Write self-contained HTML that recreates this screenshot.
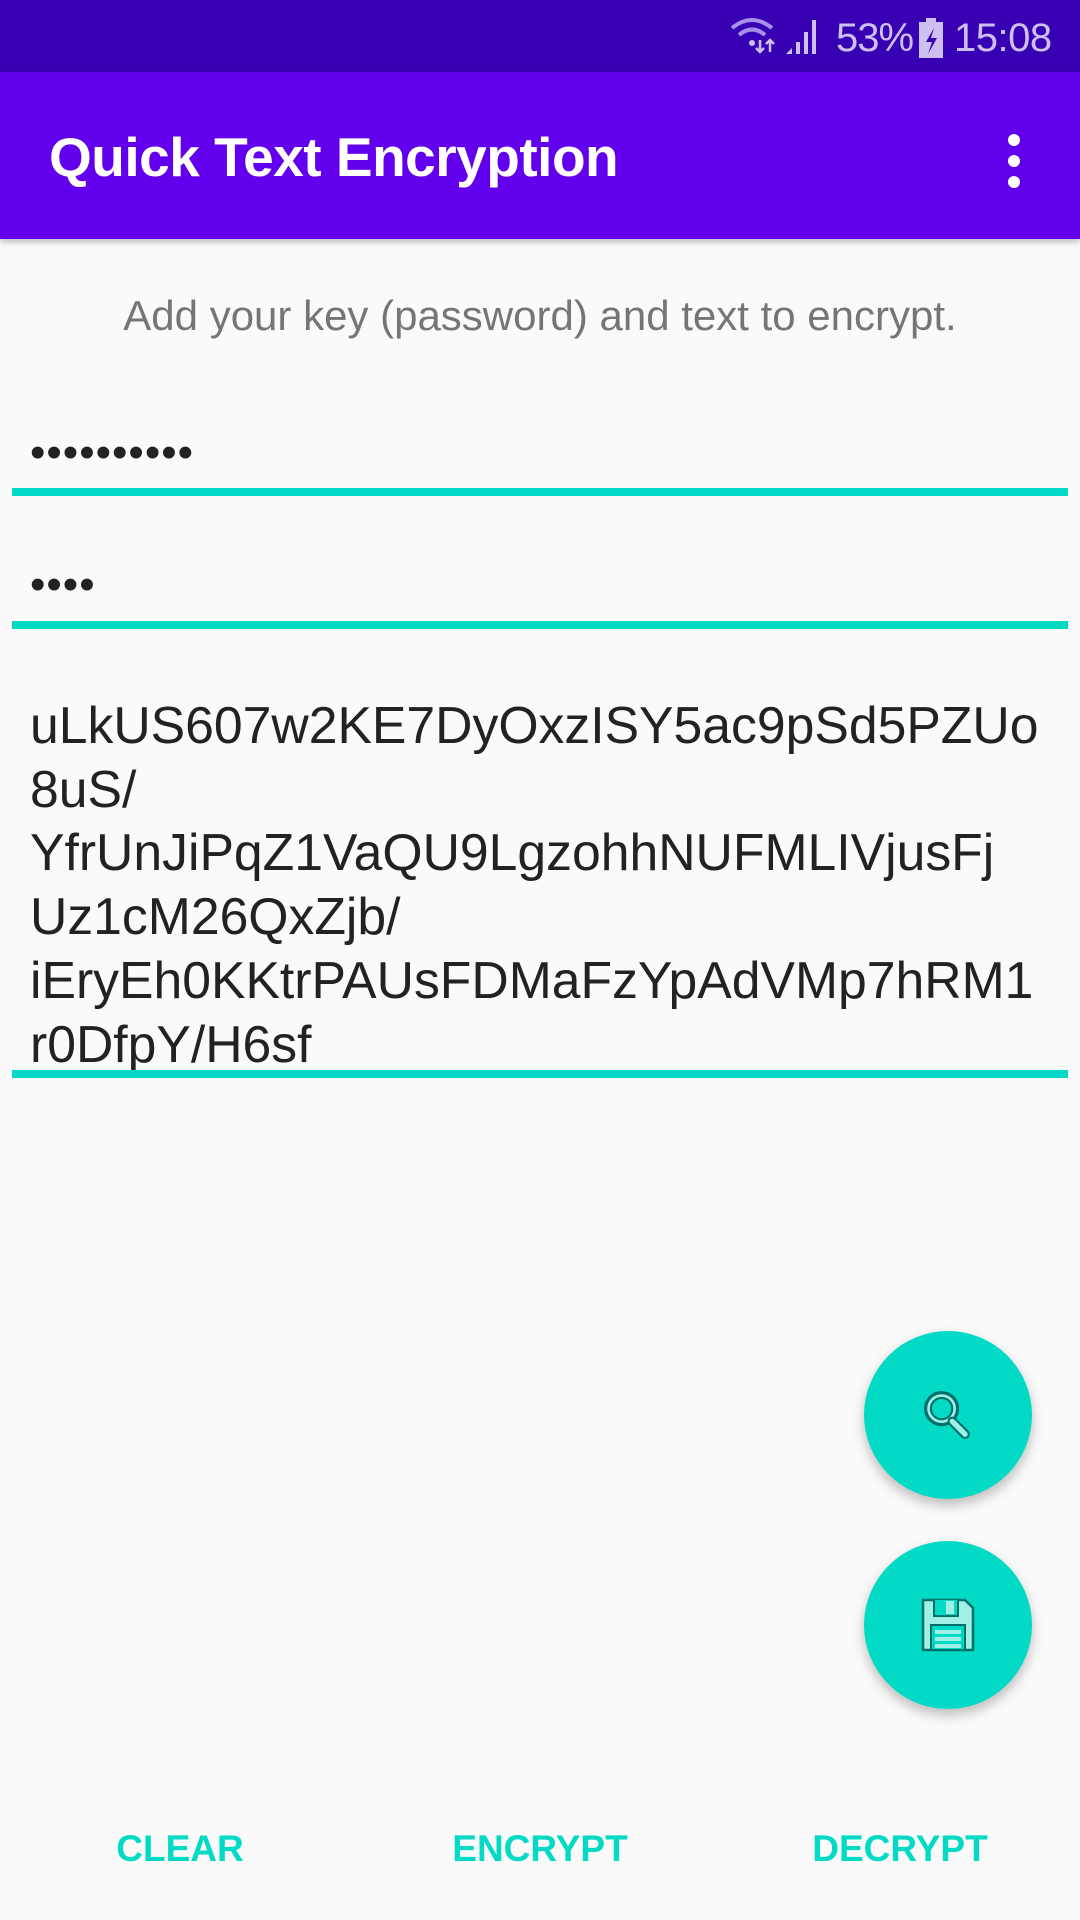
<!DOCTYPE html>
<html><head><meta charset="utf-8"><style>
*{margin:0;padding:0;box-sizing:border-box}
body{width:1080px;height:1920px;background:#fafafa;font-family:"Liberation Sans",sans-serif;position:relative;overflow:hidden}
.sb{position:absolute;top:0;left:0;width:1080px;height:72px;background:#3700B3;color:#cdbff0}
.ab{position:absolute;top:72px;left:0;width:1080px;height:167px;background:#6200EE;box-shadow:0 3px 6px rgba(0,0,0,.25)}
.title{position:absolute;left:49px;color:#fff;font-size:55px;font-weight:bold;letter-spacing:-0.5px}
.hint{position:absolute;left:0;width:1080px;text-align:center;top:292px;color:#757575;font-size:42px}
.line{position:absolute;left:12px;width:1056px;height:8px;background:#03DAC5}
.dots{position:absolute;left:30px;font-size:44px;color:#222;letter-spacing:1px}
.ta{position:absolute;left:30px;top:694px;width:1045px;font-size:51.7px;line-height:63.7px;color:#222;word-break:break-all}
.fab{position:absolute;width:168px;height:168px;border-radius:50%;background:#03DAC5;box-shadow:0 6px 12px rgba(0,0,0,.25)}
.btn{position:absolute;top:1828px;color:#03DAC5;font-weight:bold;font-size:37px;transform:translateX(-50%)}
</style></head><body>
<div class="sb">
<svg style="position:absolute;left:730px;top:16px" width="70" height="40" viewBox="0 0 70 40"><path d="M2 12 Q22 -4 42 12" stroke="#a890e8" stroke-width="4" fill="none"/><path d="M9 19 Q22 8 35 19" stroke="#a890e8" stroke-width="4" fill="none"/><circle cx="22" cy="27" r="3" fill="#cdbff0"/><path d="M30 24v12M26 32l4 4 4-4M40 36v-12M36 28l4-4 4 4" stroke="#cdbff0" stroke-width="2.5" fill="none"/></svg>
<svg style="position:absolute;left:784px;top:16px" width="40" height="40" viewBox="0 0 40 40"><path d="M2 38l6-6v6z" fill="#cdbff0"/><rect x="12" y="26" width="4" height="12" fill="#cdbff0"/><rect x="20" y="16" width="4" height="22" fill="#cdbff0"/><rect x="28" y="4" width="4" height="34" fill="#cdbff0"/></svg>
<div style="position:absolute;left:836px;top:16px;font-size:40px;letter-spacing:-1px">53%</div>
<svg style="position:absolute;left:918px;top:18px" width="26" height="40" viewBox="0 0 26 40"><rect x="8" y="0" width="10" height="4" fill="#cdbff0"/><rect x="1" y="4" width="24" height="36" fill="#cdbff0"/><path d="M16 10l-8 14h6l-4 12 9-16h-6z" fill="#3700B3"/></svg>
<div style="position:absolute;left:954px;top:16px;font-size:40px;letter-spacing:-0.5px">15:08</div>
</div>
<div class="ab"><div class="title" style="top:53px">Quick Text Encryption</div>
<svg style="position:absolute;left:1002px;top:60px" width="24" height="60"><circle cx="12" cy="8" r="6" fill="#fff"/><circle cx="12" cy="29" r="6" fill="#fff"/><circle cx="12" cy="50" r="6" fill="#fff"/></svg></div>
<div class="hint">Add your key (password) and text to encrypt.</div>
<div class="dots" style="top:428px">••••••••••</div>
<div class="line" style="top:488px"></div>
<div class="dots" style="top:560px">••••</div>
<div class="line" style="top:621px"></div>
<div class="ta">uLkUS607w2KE7DyOxzISY5ac9pSd5PZUo<br>8uS/<br>YfrUnJiPqZ1VaQU9LgzohhNUFMLIVjusFj<br>Uz1cM26QxZjb/<br>iEryEh0KKtrPAUsFDMaFzYpAdVMp7hRM1<br>r0DfpY/H6sf</div>
<div class="line" style="top:1070px"></div>
<div class="fab" style="left:864px;top:1331px"><svg style="position:absolute;left:52px;top:52px" width="64" height="64" viewBox="0 0 60 60"><circle cx="24" cy="24" r="15" fill="#a0f0e8" stroke="#00706a" stroke-width="3"/><circle cx="24" cy="24" r="10" fill="#03DAC5" stroke="#00706a" stroke-width="2"/><path d="M34 36l12 12" stroke="#00706a" stroke-width="9" stroke-linecap="round"/><path d="M34 36l12 12" stroke="#a0f0e8" stroke-width="5" stroke-linecap="round"/></svg></div>
<div class="fab" style="left:864px;top:1541px"><svg style="position:absolute;left:54px;top:54px" width="60" height="60" viewBox="0 0 60 60"><path d="M5 5h42l8 8v42H5z" fill="#a0f0e8" stroke="#00706a" stroke-width="2.5"/><path d="M16 5v16h24V5" fill="#03DAC5" stroke="#00706a" stroke-width="2"/><rect x="28" y="6" width="8" height="13" fill="#a0f0e8"/><rect x="13" y="30" width="34" height="25" fill="#03DAC5" stroke="#00706a" stroke-width="2"/><path d="M17 37h26M17 44h26M17 51h26" stroke="#a0f0e8" stroke-width="4"/></svg></div>
<div class="btn" style="left:180px">CLEAR</div>
<div class="btn" style="left:540px">ENCRYPT</div>
<div class="btn" style="left:900px">DECRYPT</div>
</body></html>
